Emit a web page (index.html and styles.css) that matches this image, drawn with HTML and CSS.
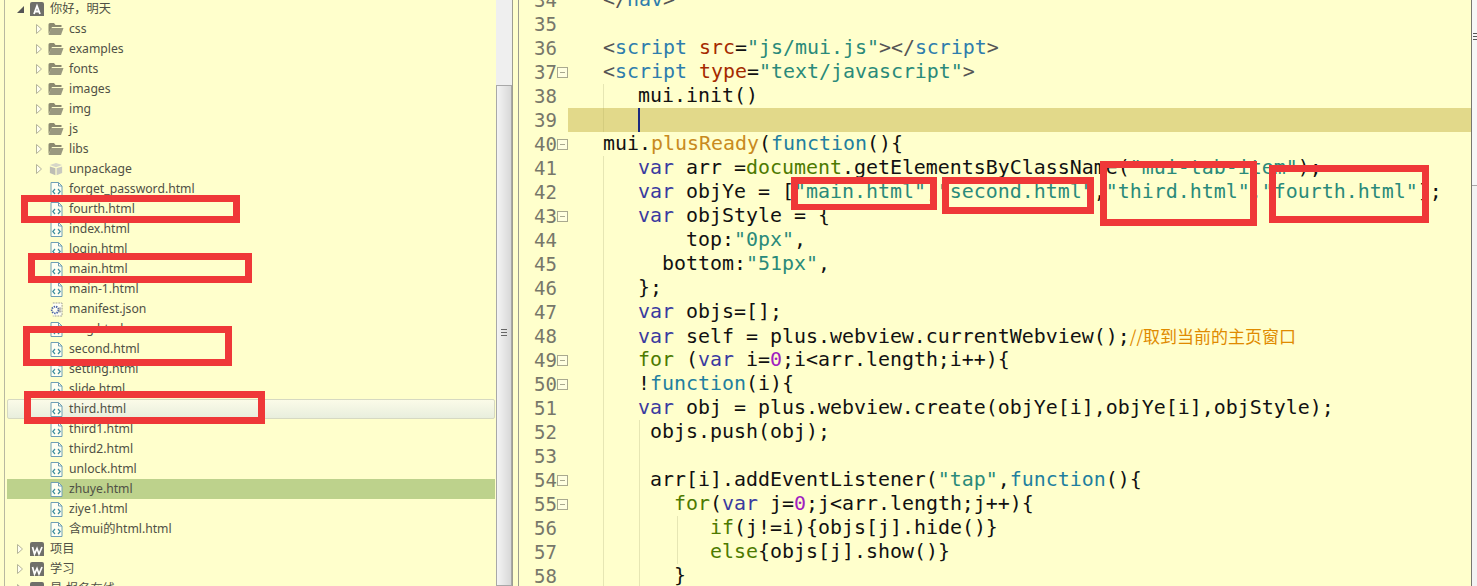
FILE: index.html
```html
<!DOCTYPE html>
<html lang="zh">
<head>
<meta charset="utf-8">
<title>HBuilder</title>
<link rel="stylesheet" href="styles.css">
</head>
<body>
<svg class="defs" width="0" height="0" aria-hidden="true">
  <symbol id="arrow" viewBox="0 0 8 12"><path d="M1.5 1.5 L6.5 6 L1.5 10.5 Z" fill="#fffff0" stroke="#b5b59a"/></symbol>
  <symbol id="folder" viewBox="0 0 16 14"><path d="M0.5 2.5 Q0.5 1 2 1 H6 L7.5 3 H13.5 V5 H4 L0.5 12 Z" fill="#8b8a70"/><path d="M3 6 H15.5 L13 13 H0.5 Z" fill="#9a9980"/></symbol>
  <symbol id="package" viewBox="0 0 16 16"><path d="M8 1 L15 3.5 L8 6 L1 3.5 Z" fill="#d6d6c8"/><path d="M1 5 L7.3 7.2 V15 L1 12.5 Z" fill="#bdbdb4"/><path d="M15 5 L8.7 7.2 V15 L15 12.5 Z" fill="#c9c9c0"/></symbol>
  <symbol id="html" viewBox="0 0 13 15"><path d="M1 .5 H8.5 L12 4 V14.5 H1 Z" fill="#fffff2" stroke="#6f9fb5"/><path d="M8.5 .5 V4 H12" fill="none" stroke="#6f9fb5"/><path d="M5 7 L2.8 9.5 L5 12 M8 7 L10.2 9.5 L8 12" fill="none" stroke="#3f8f9f" stroke-width="1.2"/></symbol>
  <symbol id="json" viewBox="0 0 14 15"><path d="M3 .5 H13 V14.5 H3" fill="#fffff2" stroke="#9a9a90" stroke-dasharray="2 1"/><circle cx="5.5" cy="8" r="3.6" fill="none" stroke="#4a63a8" stroke-width="2" stroke-dasharray="1.5 1"/><path d="M9 6 H12 M9 8 H12 M9 10 H12" stroke="#888"/></symbol>
  <symbol id="project-a" viewBox="0 0 16 16"><path d="M1 3 Q1 1 3 1 H13 Q15 1 15 3 V15 H1 Z" fill="#6f6f6a"/><path d="M5 13 L8 5 L11 13 M6.2 10.5 H9.8" fill="none" stroke="#fff" stroke-width="1.8"/></symbol>
  <symbol id="project-w" viewBox="0 0 16 16"><path d="M1 3 Q1 1 3 1 H13 Q15 1 15 3 V15 H1 Z" fill="#6f6f6a"/><path d="M3.5 6 L5.5 13 L8 7.5 L10 13 L13 6" fill="none" stroke="#fff" stroke-width="1.7"/></symbol>
</svg>

<div class="workbench">
  <aside class="tree-pane">
    <ul class="tree">
      <li class="row lvl0"><span class="twist open"></span><svg class="ico-p"><use href="#project-a"/></svg><span>你好，明天</span></li>
      <li class="row lvl1"><svg class="tw"><use href="#arrow"/></svg><svg class="ico-f"><use href="#folder"/></svg><span>css</span></li>
      <li class="row lvl1"><svg class="tw"><use href="#arrow"/></svg><svg class="ico-f"><use href="#folder"/></svg><span>examples</span></li>
      <li class="row lvl1"><svg class="tw"><use href="#arrow"/></svg><svg class="ico-f"><use href="#folder"/></svg><span>fonts</span></li>
      <li class="row lvl1"><svg class="tw"><use href="#arrow"/></svg><svg class="ico-f"><use href="#folder"/></svg><span>images</span></li>
      <li class="row lvl1"><svg class="tw"><use href="#arrow"/></svg><svg class="ico-f"><use href="#folder"/></svg><span>img</span></li>
      <li class="row lvl1"><svg class="tw"><use href="#arrow"/></svg><svg class="ico-f"><use href="#folder"/></svg><span>js</span></li>
      <li class="row lvl1"><svg class="tw"><use href="#arrow"/></svg><svg class="ico-f"><use href="#folder"/></svg><span>libs</span></li>
      <li class="row lvl1"><svg class="tw"><use href="#arrow"/></svg><svg class="ico-f"><use href="#package"/></svg><span>unpackage</span></li>
      <li class="row lvl2"><svg class="ico-h"><use href="#html"/></svg><span>forget_password.html</span></li>
      <li class="row lvl2"><svg class="ico-h"><use href="#html"/></svg><span>fourth.html</span></li>
      <li class="row lvl2"><svg class="ico-h"><use href="#html"/></svg><span>index.html</span></li>
      <li class="row lvl2"><svg class="ico-h"><use href="#html"/></svg><span>login.html</span></li>
      <li class="row lvl2"><svg class="ico-h"><use href="#html"/></svg><span>main.html</span></li>
      <li class="row lvl2"><svg class="ico-h"><use href="#html"/></svg><span>main-1.html</span></li>
      <li class="row lvl2"><svg class="ico-h"><use href="#json"/></svg><span>manifest.json</span></li>
      <li class="row lvl2"><svg class="ico-h"><use href="#html"/></svg><span>msg.html</span></li>
      <li class="row lvl2"><svg class="ico-h"><use href="#html"/></svg><span>second.html</span></li>
      <li class="row lvl2"><svg class="ico-h"><use href="#html"/></svg><span>setting.html</span></li>
      <li class="row lvl2"><svg class="ico-h"><use href="#html"/></svg><span>slide.html</span></li>
      <li class="row lvl2 hover"><svg class="ico-h"><use href="#html"/></svg><span>third.html</span></li>
      <li class="row lvl2"><svg class="ico-h"><use href="#html"/></svg><span>third1.html</span></li>
      <li class="row lvl2"><svg class="ico-h"><use href="#html"/></svg><span>third2.html</span></li>
      <li class="row lvl2"><svg class="ico-h"><use href="#html"/></svg><span>unlock.html</span></li>
      <li class="row lvl2 selected"><svg class="ico-h"><use href="#html"/></svg><span>zhuye.html</span></li>
      <li class="row lvl2"><svg class="ico-h"><use href="#html"/></svg><span>ziye1.html</span></li>
      <li class="row lvl2"><svg class="ico-h"><use href="#html"/></svg><span>含mui的html.html</span></li>
      <li class="row lvl0"><svg class="tw"><use href="#arrow"/></svg><svg class="ico-p"><use href="#project-w"/></svg><span>项目</span></li>
      <li class="row lvl0"><svg class="tw"><use href="#arrow"/></svg><svg class="ico-p"><use href="#project-w"/></svg><span>学习</span></li>
      <li class="row lvl0"><svg class="tw"><use href="#arrow"/></svg><svg class="ico-p"><use href="#project-w"/></svg><span>星-报名在线</span></li>
    </ul>
    <div class="scrollbar"><div class="thumb"><span class="grip"></span></div></div>
  </aside>
  <div class="sash"></div>
  <main class="editor">
    <div class="code">
      <div class="ln"><b>34</b><code class="i1"><i class="p">&lt;/</i><i class="t">nav</i><i class="p">&gt;</i></code></div>
      <div class="ln"><b>35</b><code></code></div>
      <div class="ln"><b>36</b><code class="i1"><i class="p">&lt;</i><i class="t">script</i> <i class="a">src</i>=<i class="s">"js/mui.js"</i><i class="p">&gt;&lt;/</i><i class="t">script</i><i class="p">&gt;</i></code></div>
      <div class="ln fold"><b>37</b><code class="i1"><i class="p">&lt;</i><i class="t">script</i> <i class="a">type</i>=<i class="s">"text/javascript"</i><i class="p">&gt;</i></code></div>
      <div class="ln g1"><b>38</b><code class="i4">mui.init()</code></div>
      <div class="ln current"><b>39</b><code class="i4"><span class="caret"></span></code></div>
      <div class="ln fold"><b>40</b><code class="i1">mui.<i class="m">plusReady</i>(<i class="k">function</i>(){</code></div>
      <div class="ln g1"><b>41</b><code class="i4"><i class="v">var</i> arr =<i class="g">document</i>.getElementsByClassName(<i class="s">"mui-tab-item"</i>);</code></div>
      <div class="ln g1"><b>42</b><code class="i4"><i class="v">var</i> objYe = [<i class="s">"main.html"</i>,<i class="s">"second.html"</i>,<i class="s">"third.html"</i>,<i class="s">"fourth.html"</i>];</code></div>
      <div class="ln fold g1"><b>43</b><code class="i4"><i class="v">var</i> objStyle = {</code></div>
      <div class="ln g1"><b>44</b><code class="i8">top:<i class="s">"0px"</i>,</code></div>
      <div class="ln g1"><b>45</b><code class="i6">bottom:<i class="s">"51px"</i>,</code></div>
      <div class="ln g1"><b>46</b><code class="i4">};</code></div>
      <div class="ln g1"><b>47</b><code class="i4"><i class="v">var</i> objs=[];</code></div>
      <div class="ln g1"><b>48</b><code class="i4"><i class="v">var</i> self = plus.webview.currentWebview();<i class="c">//取到当前的主页窗口</i></code></div>
      <div class="ln fold g1"><b>49</b><code class="i4"><i class="g">for</i> (<i class="v">var</i> i=<i class="n">0</i>;i&lt;arr.length;i++){</code></div>
      <div class="ln fold g1"><b>50</b><code class="i4">!<i class="k">function</i>(i){</code></div>
      <div class="ln g1"><b>51</b><code class="i4"><i class="v">var</i> obj = plus.webview.create(objYe[i],objYe[i],objStyle);</code></div>
      <div class="ln g2"><b>52</b><code class="i5">objs.push(obj);</code></div>
      <div class="ln g2"><b>53</b><code></code></div>
      <div class="ln fold g2"><b>54</b><code class="i5">arr[i].addEventListener(<i class="s">"tap"</i>,<i class="k">function</i>(){</code></div>
      <div class="ln fold g2"><b>55</b><code class="i7"><i class="g">for</i>(<i class="v">var</i> j=<i class="n">0</i>;j&lt;arr.length;j++){</code></div>
      <div class="ln g3"><b>56</b><code class="i9"><i class="g">if</i>(j!=i){objs[j].hide()}</code></div>
      <div class="ln g3"><b>57</b><code class="i9"><i class="g">else</i>{objs[j].show()}</code></div>
      <div class="ln g2"><b>58</b><code class="i7">}</code></div>
    </div>
    <div class="vscroll"><div class="vthumb"><span class="vgrip"></span></div></div>
  </main>
</div>

<div class="mark m-fourth"></div>
<div class="mark m-main"></div>
<div class="mark m-second"></div>
<div class="mark m-third"></div>
<div class="mark c-main"></div>
<div class="mark c-second"></div>
<div class="mark c-third"></div>
<div class="mark c-fourth"></div>
</body>
</html>
```
FILE: styles.css
```css
* { box-sizing: border-box; }
html, body { margin: 0; height: 100%; overflow: hidden; background: #ffffcc; }
.defs { position: absolute; }
.workbench { display: flex; height: 586px; overflow: hidden; }

.tree-pane { width: 508px; flex: none; margin-left: 4px; display: flex; background: #ffffcc; border-left: 1px solid #b8b8a0; }
.tree { list-style: none; margin: -1px 0 0; padding: 0 0 0 2px; width: 490px; flex: none; font: 12.2px/20px "Noto Sans", "Noto Sans CJK SC", sans-serif; color: #4f5045; }
.row { height: 20px; display: flex; align-items: center; white-space: nowrap; }
.lvl0 { padding-left: 9px; }
.lvl1 { padding-left: 28px; }
.lvl2 { padding-left: 43px; }
.tw { width: 8px; height: 12px; flex: none; margin-right: 5px; }
.twist.open { width: 0; height: 0; border-style: solid; border-width: 0 0 7px 7px; border-color: transparent transparent #555 transparent; margin: 0 5px 0 1px; }
.ico-p { width: 16px; height: 16px; margin-right: 5px; flex: none; }
.ico-f { width: 16px; height: 14px; margin-right: 5px; flex: none; }
.ico-h { width: 13px; height: 15px; margin-right: 6px; flex: none; }
.hover { background: linear-gradient(#fbfbe8, #e8eedd); border: 1px solid #d6d9c2; border-radius: 2px; padding-left: 42px; }
.selected { background: #bdd28c; }

.scrollbar { width: 16px; margin-left: 1px; flex: none; background: #efefef; position: relative; }
.thumb { position: absolute; left: 0; right: 0; top: 85px; bottom: 0; background: linear-gradient(90deg, #f4f4f4, #d8d8d8); border: 1px solid #a8a8a8; }
.grip { position: absolute; left: 4px; top: 243px; width: 6px; height: 7px; background: repeating-linear-gradient(#666 0 1px, transparent 1px 3px); }

.sash { width: 6px; flex: none; background: #ffffcc; border-left: 1px solid #9d9d90; }

.editor { flex: 1; min-width: 0; display: flex; background: #ffffcc; border-left: 1px solid #9d9d90; overflow: hidden; }
.code { flex: 1; min-width: 0; margin-top: -12px; font: 19.93px/24px "DejaVu Sans Mono", monospace; color: #111; }
.ln { display: flex; height: 24px; position: relative; white-space: pre; }
.ln b { width: 38px; flex: none; text-align: right; font-weight: 400; color: #77776a; font-size: 19px; }
.ln code { font: inherit; display: block; flex: 1; }
.fold::after { content: ""; position: absolute; left: 38px; top: 7px; width: 9px; height: 9px; border: 1px solid #a9a98f; background: linear-gradient(#a9a98f, #a9a98f) center / 5px 1px no-repeat #ffffe0; }
.g1, .g2, .g3 { background-repeat: no-repeat; background-size: 1px 100%; }
.g1 { background-image: linear-gradient(#e6e6b4, #e6e6b4); background-position: 84px 0; }
.g2 { background-image: linear-gradient(#e6e6b4, #e6e6b4), linear-gradient(#e6e6b4, #e6e6b4); background-position: 84px 0, 120px 0; }
.g3 { background-image: linear-gradient(#e6e6b4, #e6e6b4), linear-gradient(#e6e6b4, #e6e6b4), linear-gradient(#e6e6b4, #e6e6b4); background-position: 84px 0, 120px 0, 158px 0; }
.current { background: linear-gradient(#d4cc7e, #d4cc7e) 84px 0 / 1px 100% no-repeat, linear-gradient(90deg, transparent 0 49px, #e2d98a 49px); }
.caret { display: inline-block; width: 2px; height: 24px; background: #1b2a80; vertical-align: top; }
.ln i { font-style: normal; }
.ln .p { color: #555; }
.ln .t { color: #2e7dad; }
.ln .a { color: #a52a00; }
.ln .s { color: #2a8a7a; }
.ln .v { color: #3a3aa0; }
.ln .g { color: #4d7a00; }
.ln .k { color: #1f7f9f; }
.ln .m { color: #c88a20; }
.ln .n { color: #a020c0; }
.ln .c { color: #e08a00; font-family: "Noto Sans CJK SC", "DejaVu Sans Mono", monospace; font-size: 17px; }
.i1 { margin-left: 46px; }
.i4 { margin-left: 81px; }
.i5 { margin-left: 93px; }
.i6 { margin-left: 105px; }
.i7 { margin-left: 117px; }
.i8 { margin-left: 129px; }
.i9 { margin-left: 153px; }

.vscroll { width: 6px; flex: none; background: #f3f3f3; border-left: 1px solid #77776f; }
.vthumb { height: 186px; background: #f7f7f7; border-bottom: 1px solid #a8a8a8; padding-top: 33px; }
.vgrip { display: block; width: 4px; height: 9px; margin-left: 1px; background: repeating-linear-gradient(#555 0 1px, transparent 1px 3px); }

.mark { position: absolute; border: 7px solid #ef3838; }
.m-fourth { left: 21px; top: 195px; width: 219px; height: 28px; }
.m-main { left: 28px; top: 253px; width: 224px; height: 30px; }
.m-second { left: 23px; top: 326px; width: 209px; height: 40px; }
.m-third { left: 24px; top: 391px; width: 241px; height: 33px; }
.c-main { left: 791px; top: 177px; width: 146px; height: 33px; border-bottom-width: 6px; }
.c-second { left: 942px; top: 177px; width: 152px; height: 37px; }
.c-third { left: 1100px; top: 161px; width: 157px; height: 65px; }
.c-fourth { left: 1269px; top: 165px; width: 160px; height: 58px; }
```
